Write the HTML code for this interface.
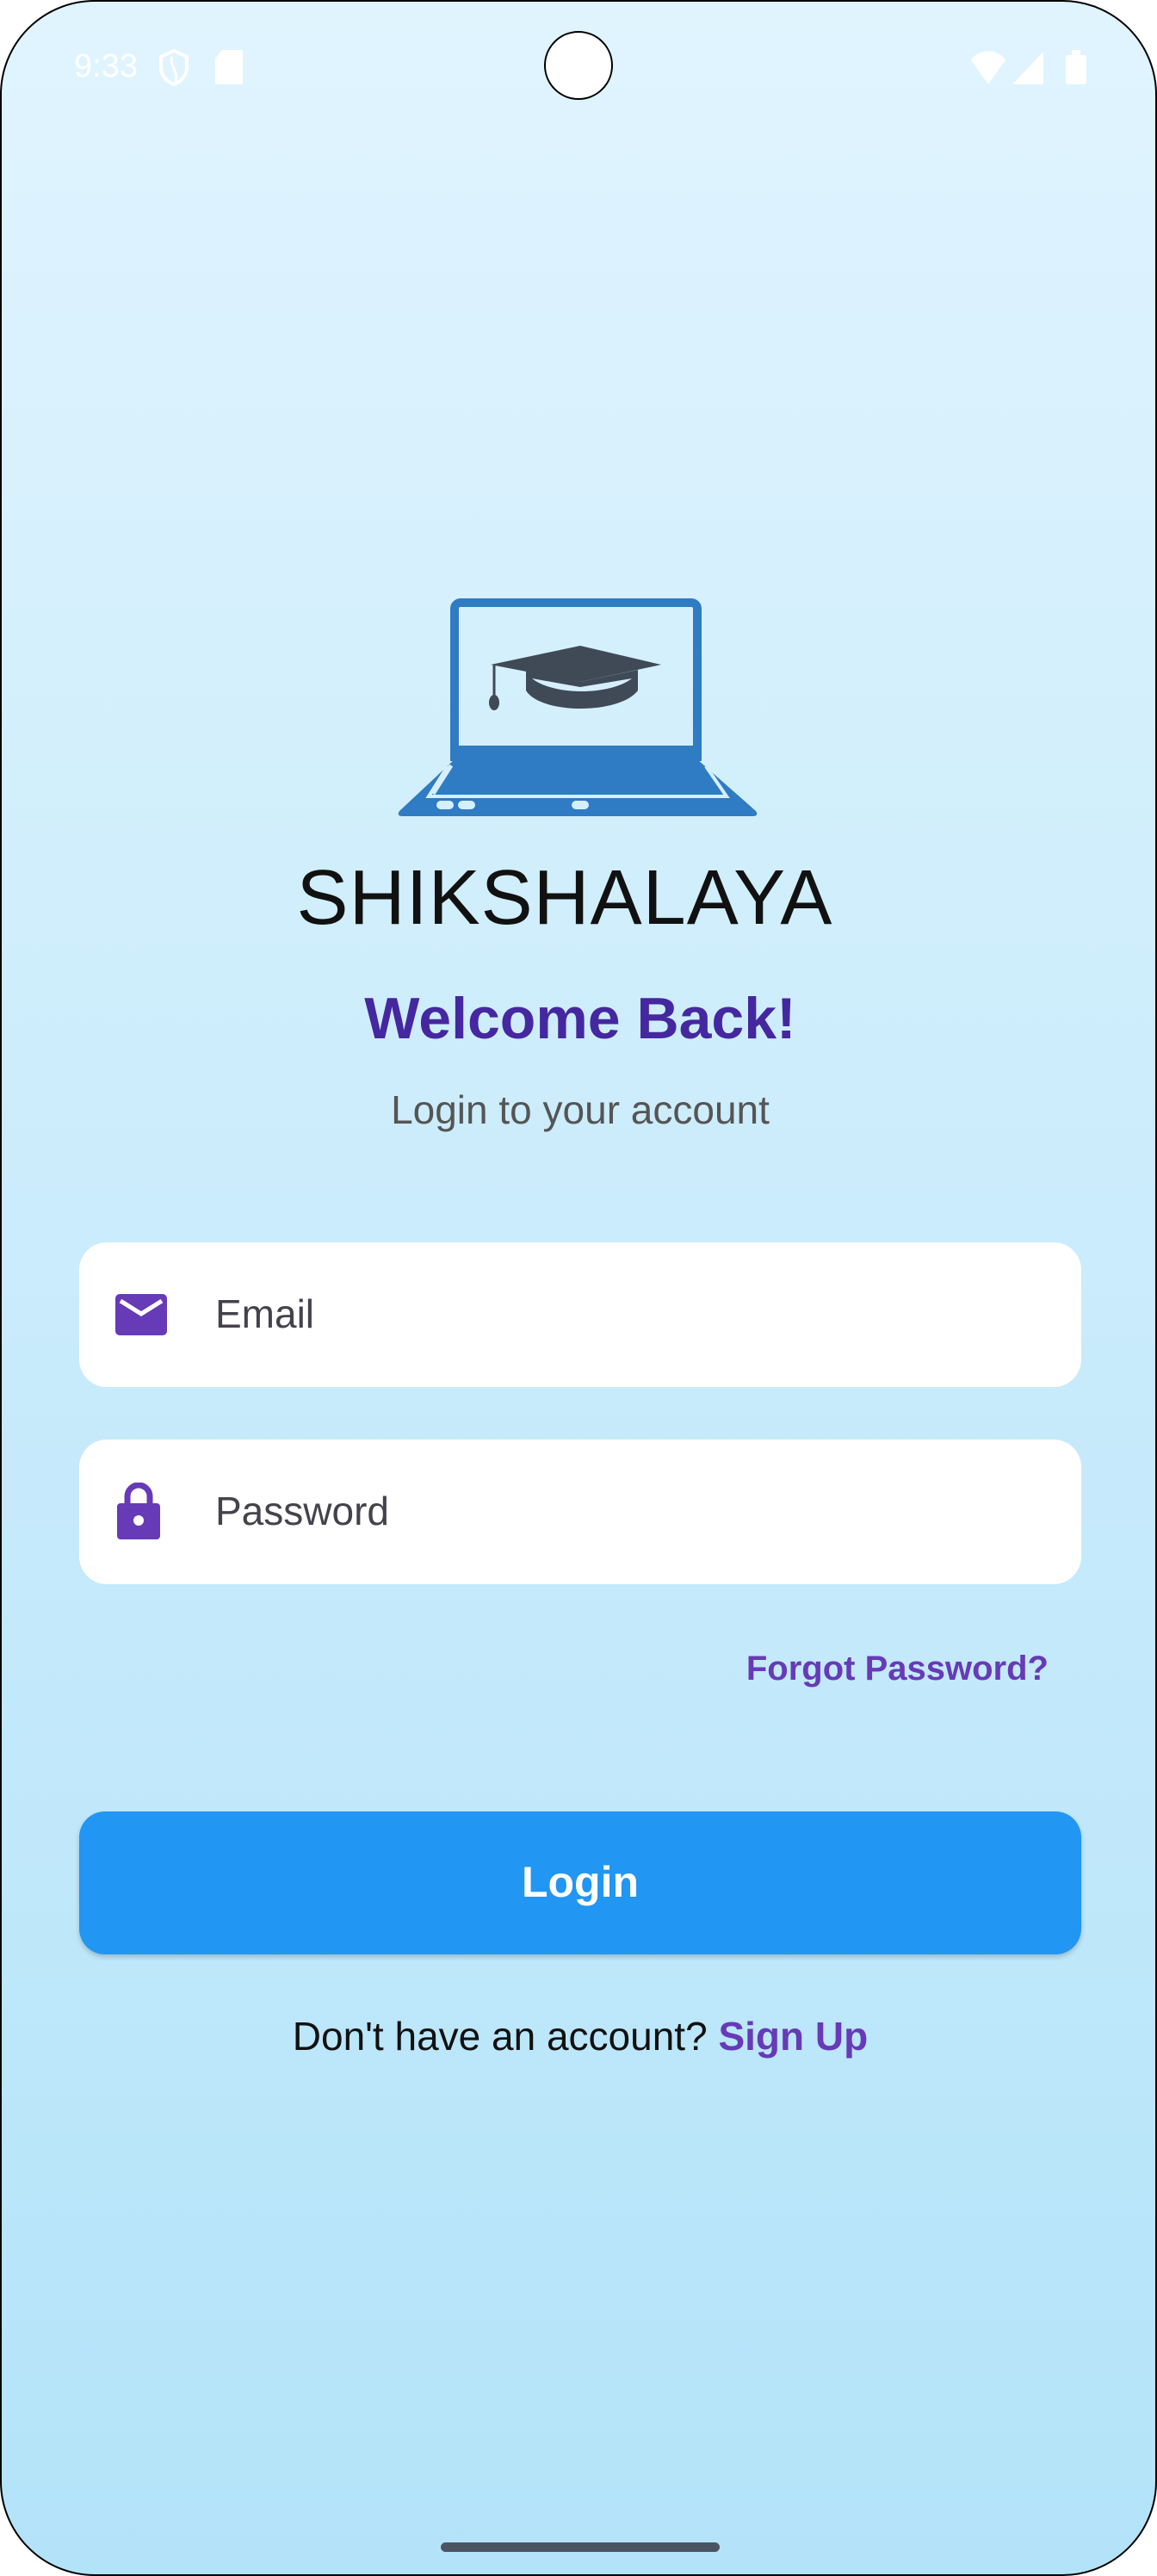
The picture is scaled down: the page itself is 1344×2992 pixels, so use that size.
<!DOCTYPE html>
<html><head><meta charset="utf-8"><style>
html,body{margin:0;padding:0;}
body{width:1344px;height:2992px;position:relative;overflow:hidden;background:#fff;font-family:"Liberation Sans",sans-serif;}
.frame{position:absolute;left:0;top:0;width:1340px;height:2988px;border:2px solid #000;border-radius:110px;background:linear-gradient(#e0f4fe,#b3e3f9);overflow:hidden;}
.t{position:absolute;white-space:nowrap;}
.field{position:absolute;left:90px;width:1164px;height:168px;background:#fff;border-radius:32px;}
</style></head><body>
<div class="frame">
  <div class="t" style="left:84px;top:54px;font-size:38px;color:#fff;">9:33</div>
  <svg style="position:absolute;left:180px;top:54px" width="40" height="44" viewBox="0 0 40 44"><path d="M20 3 L35 10 V22 C35 32 28 39 20 42 C12 39 5 32 5 22 V10 Z" fill="none" stroke="#fff" stroke-width="4"/><path d="M18 10 C14 20 26 26 22 40" fill="none" stroke="#fff" stroke-width="3"/></svg>
  <svg style="position:absolute;left:248px;top:56px" width="32" height="40"><path d="M8 0 H32 V40 H0 V10 Z" fill="#fff"/></svg>
  <svg style="position:absolute;left:1126px;top:56px" width="140" height="40"><path d="M0 12 C8 -2 32 -2 40 12 L20 40 Z" fill="#fff"/><path d="M48 40 L84 2 V40 Z" fill="#fff"/><rect x="110" y="6" width="24" height="34" rx="3" fill="#fff"/><rect x="117" y="0" width="10" height="8" fill="#fff"/></svg>
  <div style="position:absolute;left:630px;top:34px;width:80px;height:80px;border:2px solid #000;border-radius:50%;background:#fff;box-sizing:border-box;"></div>

  <svg style="position:absolute;left:456px;top:690px" width="426" height="260" viewBox="0 0 426 260">
    <rect x="70" y="8" width="282" height="180" rx="7" fill="none" stroke="#2f7bc4" stroke-width="10"/>
    <rect x="65" y="174" width="292" height="18" fill="#2f7bc4"/>
    <path d="M70 190 H352 L420 250 Q424 256 416 256 H10 Q2 256 6 250 Z" fill="#2f7bc4"/>
    <path d="M67 200 H355 L375 228 H49 Z" fill="#2f7bc4"/>
    <path d="M62 198 L40 233 H386 L362 198" fill="none" stroke="#d6effc" stroke-width="4"/>
    <path d="M66 197 L45 230" fill="none" stroke="#d6effc" stroke-width="5"/>
    <rect x="49" y="238" width="20" height="10" rx="5" fill="#d6effc"/><rect x="74" y="238" width="20" height="10" rx="5" fill="#d6effc"/><rect x="206" y="238" width="20" height="10" rx="5" fill="#d6effc"/>
    <path d="M112 80 L216 58 L310 80 L216 100 Z" fill="#3f4a56"/>
    <path d="M153 86 V110 C170 138 262 138 283 110 V86 L216 100 Z" fill="#3f4a56"/>
    <path d="M160 96 C185 116 250 116 276 96 L216 106 Z" fill="#d6effc"/>
    <path d="M116 80 V118" stroke="#3f4a56" stroke-width="3"/>
    <ellipse cx="116" cy="124" rx="6" ry="9" fill="#3f4a56"/>
  </svg>
  <div class="t" style="left:336px;top:990px;width:636px;text-align:center;font-size:90px;letter-spacing:1px;color:#111;">SHIKSHALAYA</div>

  <div class="t" style="left:0;width:1344px;text-align:center;top:1142px;font-size:68px;font-weight:bold;color:#4527a0;">Welcome Back!</div>
  <div class="t" style="left:0;width:1344px;text-align:center;top:1260px;font-size:46px;color:#555;">Login to your account</div>

  <div class="field" style="top:1441px;">
    <svg style="position:absolute;left:42px;top:60px" width="60" height="48" viewBox="0 0 60 48"><rect width="60" height="48" rx="5" fill="#673ab7"/><path d="M6 8 L30 23 L54 8" fill="none" stroke="#fff" stroke-width="5"/></svg>
    <div class="t" style="left:158px;top:56px;font-size:46px;color:#45424c;">Email</div>
  </div>
  <div class="field" style="top:1670px;">
    <svg style="position:absolute;left:44px;top:50px" width="50" height="66" viewBox="0 0 50 66"><path d="M12 26 V16 A13 13 0 0 1 38 16 V26" fill="none" stroke="#673ab7" stroke-width="7"/><rect x="0" y="24" width="50" height="42" rx="4" fill="#673ab7"/><circle cx="25" cy="44" r="6" fill="#fff"/></svg>
    <div class="t" style="left:158px;top:56px;font-size:46px;color:#45424c;">Password</div>
  </div>

  <div class="t" style="right:124px;top:1914px;font-size:40px;font-weight:bold;color:#673ab7;">Forgot Password?</div>

  <div style="position:absolute;left:90px;top:2102px;width:1164px;height:166px;border-radius:30px;background:#2196f3;box-shadow:0 3px 6px rgba(0,0,0,.2);"></div>
  <div class="t" style="left:90px;width:1164px;text-align:center;top:2155px;font-size:50px;font-weight:bold;color:#fff;">Login</div>

  <div class="t" style="left:0;width:1344px;text-align:center;top:2336px;font-size:46px;color:#111;">Don't have an account? <b style="color:#673ab7">Sign Up</b></div>

  <div style="position:absolute;left:510px;top:2951px;width:324px;height:11px;border-radius:6px;background:#4a5561;"></div>
</div>
</body></html>
